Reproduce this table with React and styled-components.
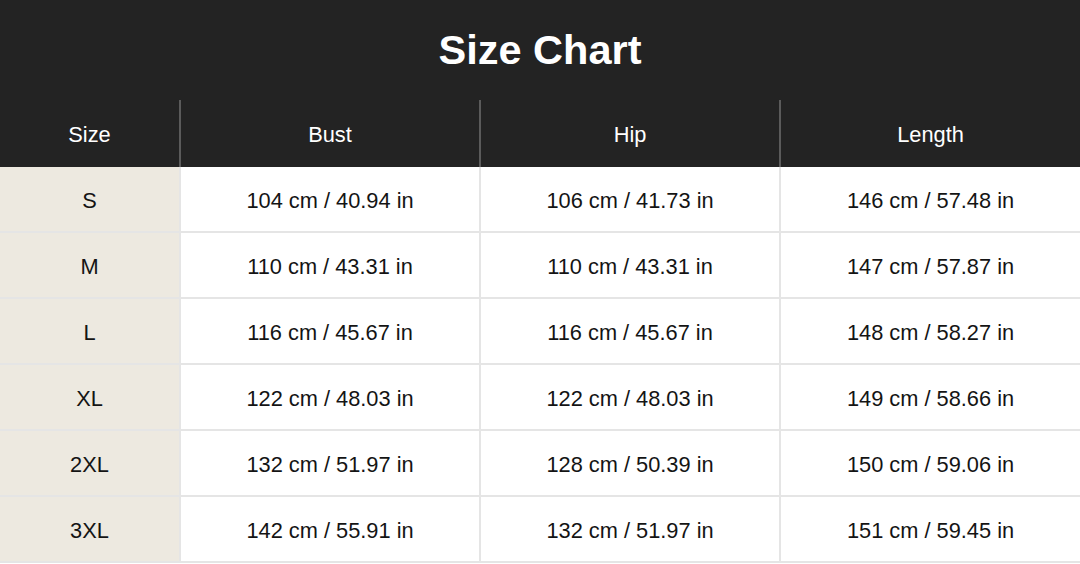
import React from 'react';
import styled, { createGlobalStyle } from 'styled-components';

const GlobalStyle = createGlobalStyle`
  html, body {
    margin: 0;
    padding: 0;
    background: #ffffff;
  }
  body {
    font-family: "Liberation Sans", Arial, Helvetica, sans-serif;
    color: #111111;
  }
`;

const Chart = styled.div`
  width: 1080px;
  overflow: hidden;
`;

const TitleBar = styled.div`
  height: 100px;
  background: #232323;
  display: flex;
  align-items: center;
  justify-content: center;
`;

const Title = styled.h1`
  margin: 0;
  font-size: 41.5px;
  font-weight: 700;
  color: #ffffff;
`;

const Row = styled.div`
  display: grid;
  grid-template-columns: 179px 300px 300px 301px;
`;

const HeadCell = styled.div`
  height: 67px;
  padding-top: 2px;
  background: #232323;
  color: #ffffff;
  font-size: 21.8px;
  display: flex;
  align-items: center;
  justify-content: center;
  border-left: ${(p) => (p.$first ? 'none' : '2px solid #5b5b5b')};
  box-sizing: border-box;
`;

const Cell = styled.div`
  height: 66px;
  padding-top: 3px;
  box-sizing: border-box;
  background: ${(p) => (p.$size ? '#ede9e0' : '#ffffff')};
  border-bottom: 2px solid #e5e5e5;
  border-left: ${(p) => (p.$size ? 'none' : '2px solid #e5e5e5')};
  font-size: 21.8px;
  color: #141414;
  display: flex;
  align-items: center;
  justify-content: center;
`;

const columns = ['Size', 'Bust', 'Hip', 'Length'];

const rows = [
  ['S', '104 cm / 40.94 in', '106 cm / 41.73 in', '146 cm / 57.48 in'],
  ['M', '110 cm / 43.31 in', '110 cm / 43.31 in', '147 cm / 57.87 in'],
  ['L', '116 cm / 45.67 in', '116 cm / 45.67 in', '148 cm / 58.27 in'],
  ['XL', '122 cm / 48.03 in', '122 cm / 48.03 in', '149 cm / 58.66 in'],
  ['2XL', '132 cm / 51.97 in', '128 cm / 50.39 in', '150 cm / 59.06 in'],
  ['3XL', '142 cm / 55.91 in', '132 cm / 51.97 in', '151 cm / 59.45 in'],
];

const App = () => {
  return (
    <Chart>
      <GlobalStyle />
      <TitleBar>
        <Title>Size Chart</Title>
      </TitleBar>
      <Row>
        {columns.map((c, i) => (
          <HeadCell key={c} $first={i === 0}>
            {c}
          </HeadCell>
        ))}
      </Row>
      {rows.map((r) => (
        <Row key={r[0]}>
          {r.map((v, i) => (
            <Cell key={i} $size={i === 0}>
              {v}
            </Cell>
          ))}
        </Row>
      ))}
    </Chart>
  );
};

export default App;
